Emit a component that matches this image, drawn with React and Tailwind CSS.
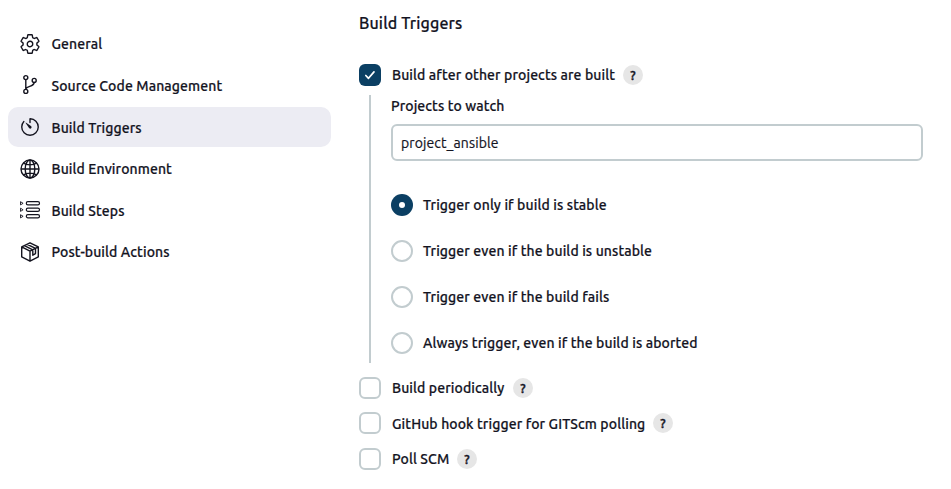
import { IoSettingsOutline, IoTimerOutline } from "react-icons/io5";

function BranchIcon() {
  return (
    <svg viewBox="0 0 22 22" className="size-[22px]" fill="none" stroke="currentColor" strokeWidth="1.4" strokeLinecap="round">
      <circle cx="6.8" cy="3.6" r="2" />
      <circle cx="15.2" cy="6.4" r="2" />
      <circle cx="6.8" cy="17.4" r="2" />
      <path d="M6.8 5.7v9.6M15.2 8.4c-.2 4.4-7 3.4-8.3 6.4" />
    </svg>
  );
}

function GlobeIcon() {
  return (
    <svg viewBox="0 0 22 22" className="size-[22px]" fill="none" stroke="currentColor" strokeWidth="1.4">
      <circle cx="11" cy="11" r="9" />
      <ellipse cx="11" cy="11" rx="4.8" ry="9" />
      <path d="M11 2v18M2 11h18M4.4 5.2c3.7 2.2 9.5 2.2 13.2 0M4.4 16.8c3.7-2.2 9.5-2.2 13.2 0" />
    </svg>
  );
}

function StepsIcon() {
  return (
    <svg viewBox="0 0 22 22" className="size-[22px]" fill="none" stroke="currentColor" strokeWidth="1.2" strokeLinejoin="round">
      <path strokeWidth="0.9" d="M1.5 2.7v3.2l2.6-1.6zM1.5 9.2v3.2l2.6-1.6zM1.5 15.7v3.2l2.6-1.6z" />
      <rect x="7.3" y="2.7" width="13.2" height="3.2" rx="1.6" />
      <rect x="7.3" y="9.2" width="13.2" height="3.2" rx="1.6" />
      <rect x="7.3" y="15.7" width="13.2" height="3.2" rx="1.6" />
    </svg>
  );
}

function PackageIcon() {
  return (
    <svg viewBox="0 0 22 22" className="size-[22px]" fill="none" stroke="currentColor" strokeWidth="1.4" strokeLinejoin="round">
      <path d="M11 1.8 19.3 5.9v10L11 20.2 2.7 15.9v-10zM2.7 5.9 11 10.2l8.3-4.3M11 10.2v10M5.4 4.6l8.4 4.2v5.4l2.7-1.6V7.4L8.2 3.3" />
    </svg>
  );
}

const tasks = [
  { label: "General", icon: <IoSettingsOutline className="size-[22px]" /> },
  { label: "Source Code Management", icon: <BranchIcon />, offset: "pt-px" },
  { label: "Build Triggers", icon: <IoTimerOutline className="size-[22px]" />, offset: "pt-0.5", active: true },
  { label: "Build Environment", icon: <GlobeIcon /> },
  { label: "Build Steps", icon: <StepsIcon />, offset: "pt-px" },
  { label: "Post-build Actions", icon: <PackageIcon /> },
];

const conditions = [
  { label: "Trigger only if build is stable", checked: true },
  { label: "Trigger even if the build is unstable" },
  { label: "Trigger even if the build fails" },
  { label: "Always trigger, even if the build is aborted" },
];

function Trigger({ label, width, checked, className = "", labelClass = "" }) {
  return (
    <div className={`flex h-[22px] items-center ${className}`}>
      <span
        className={`flex size-[22px] shrink-0 items-center justify-center rounded-[6px] ${
          checked ? "bg-[#0b3f63]" : "border-2 border-[#c2cccf]"
        }`}
      >
        {checked && (
          <svg viewBox="0 0 12 12" className="size-3" fill="none" stroke="white" strokeWidth="1.7" strokeLinecap="round" strokeLinejoin="round">
            <path d="m1.8 6.5 2.7 2.8 5.5-6.4" />
          </svg>
        )}
      </span>
      <span className={`ml-[11px] shrink-0 whitespace-nowrap ${width} ${labelClass}`}>{label}</span>
      <span className="ml-2 flex size-5 shrink-0 items-center justify-center rounded-full bg-[#e6e6e6] text-[13px] [-webkit-text-stroke:0.4px]">?</span>
    </div>
  );
}

export default function App() {
  return (
    <div className="flex h-[489px] w-[951px] overflow-hidden bg-white font-['Ubuntu','Open_Sans','Noto_Sans',sans-serif] text-[14px] leading-5 font-medium tracking-[0.11px] text-[#14141f] [-webkit-text-stroke:0.2px]">
      <nav className="ml-2 flex w-[323px] shrink-0 flex-col gap-[1.6px] pt-[23.8px]">
        {tasks.map((t) => (
          <a key={t.label} className={`flex h-10 shrink-0 items-center rounded-[10px] pl-[11px] ${t.active ? "bg-[#ececf3]" : ""}`}>
            {t.icon}
            <span className={`ml-[10.5px] whitespace-nowrap ${t.offset ?? ""}`}>{t.label}</span>
          </a>
        ))}
      </nav>
      <main className="ml-7 flex w-[564px] shrink-0 flex-col">
        <h2 className="mt-[11px] h-6 text-[16px] leading-6 font-medium tracking-[0.14px]">Build Triggers</h2>
        <Trigger className="mt-[29px]" label="Build after other projects are built" width="w-[223px]" checked />
        <section className="mt-[9px] ml-[10px] h-[268px] border-l-2 border-[#c2cccf] pl-5">
          <div className="h-5 pt-px">Projects to watch</div>
          <div className="mt-[9px] flex h-[37px] items-center rounded-[6px] border-2 border-[#c2cccf] pl-2 font-normal">
            <span>project_ansible</span>
          </div>
          <div className="mt-[33px] flex flex-col gap-6">
            {conditions.map((c) => (
              <div key={c.label} className="flex h-[22px] items-center">
                <span
                  className={`flex size-[22px] shrink-0 items-center justify-center rounded-full ${
                    c.checked ? "bg-[#0b3f63]" : "border-2 border-[#c2cccf]"
                  }`}
                >
                  {c.checked && <span className="size-[6px] rounded-full bg-white" />}
                </span>
                <span className="ml-[10px] whitespace-nowrap">{c.label}</span>
              </div>
            ))}
          </div>
        </section>
        <Trigger className="mt-[14px]" label="Build periodically" width="w-[113px]" />
        <Trigger className="mt-[13px]" label="GitHub hook trigger for GITScm polling" width="w-[253px]" labelClass="pt-0.5" />
        <Trigger className="mt-[14px]" label="Poll SCM" width="w-[57px]" />
      </main>
    </div>
  );
}
